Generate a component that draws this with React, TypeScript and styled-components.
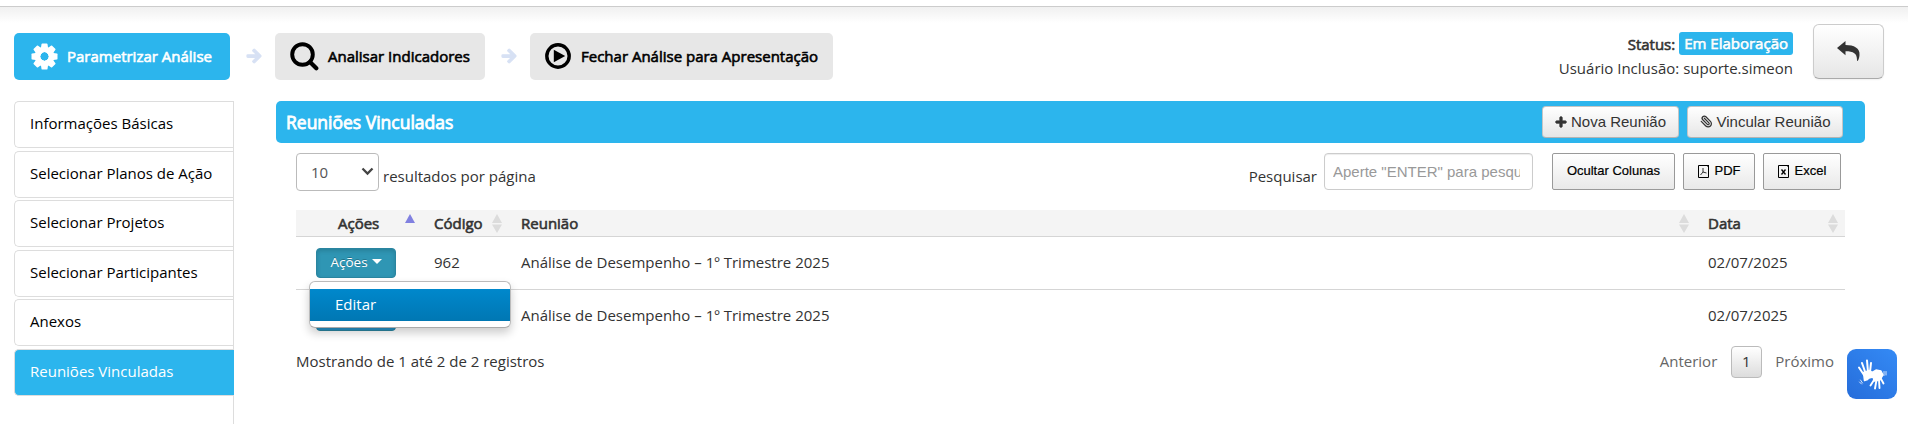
import React from "react";
import styled, { createGlobalStyle, css } from "styled-components";
import { FaArrowRight, FaPlus } from "react-icons/fa";
import { Paperclip } from "lucide-react";

const Global = createGlobalStyle`
  *{box-sizing:border-box}
  html,body{margin:0;background:#fff}
  body{font:15px/20px "Open Sans",sans-serif;color:#333;overflow:hidden}
  button,input{margin:0}
`;
const strong = css`-webkit-text-stroke:0.6px currentColor;`;
const BLUE = "#2cb5ed";

const Page = styled.div`height:424px;display:flex;flex-direction:column;`;
const TopEdge = styled.div`height:26px;flex:none;padding-top:6px;
  &::before{content:"";display:block;height:16px;border-top:1px solid #ccc;background:linear-gradient(#f0f0f0,#fff);}`;
const Header = styled.header`height:75px;flex:none;display:flex;align-items:flex-start;padding:7px 24px 0 14px;`;
const Step = styled.button<{ $active?: boolean; $w: number; $pad: number; $gap: number }>`
  display:flex;align-items:center;width:${p => p.$w}px;height:47px;border:0;border-radius:5px;padding:0 0 1px ${p => p.$pad}px;gap:${p => p.$gap}px;
  background:${p => (p.$active ? BLUE : "#e7e7e7")};color:${p => (p.$active ? "#fff" : "#000")};
  font:15px/20px "Open Sans",sans-serif;white-space:nowrap;${strong}
  svg{flex:none}
`;
const StepArrow = styled.span`width:45px;height:45px;display:flex;align-items:center;justify-content:center;padding-left:2px;color:#d7e1f4;
  svg{stroke:currentColor;stroke-width:40px}`;
const StatusBlock = styled.div`margin:-1px 20px 0 auto;text-align:right;font-size:15px;`;
const StatusLine = styled.div`display:flex;align-items:center;justify-content:flex-end;gap:4px;height:23px;line-height:22px;color:#333;${strong}`;
const Badge = styled.span`background:${BLUE};color:#fff;border-radius:3px;height:23px;line-height:22px;padding:0 5px;text-shadow:0 -1px 0 rgba(0,0,0,.2);`;
const UserLine = styled.div`margin-top:3px;`;
const BackButton = styled.button`
  width:71px;height:55px;margin-top:-9px;border:1px solid #ccc;border-bottom-color:#aaa;border-radius:6px;
  background:linear-gradient(#fff,#e6e6e6);display:flex;align-items:center;justify-content:center;padding:0;box-shadow:0 1px 2px rgba(0,0,0,.06);
`;
const Body = styled.div`flex:1;display:flex;`;
const Sidebar = styled.nav`width:220px;margin-left:14px;border-right:1px solid #ddd;display:flex;flex-direction:column;gap:2.6px;`;
const SideItem = styled.a<{ $active?: boolean }>`
  height:47px;flex:none;border:1px solid #ddd;border-right:0;border-radius:5px 0 0 5px;padding:0 0 0 15px;line-height:43px;color:#000;
  ${p => p.$active && css`background:${BLUE};color:#fff;margin-right:-1px;`}
`;
const Main = styled.main`margin-left:42px;width:1589px;`;
const PanelBar = styled.div`
  height:42px;border-radius:5px;background:${BLUE};display:flex;align-items:center;padding:0 22px 0 10px;gap:8px;
  h2{margin:0 auto 0 0;font-size:17.5px;line-height:24px;font-weight:400;color:#fff;-webkit-text-stroke:.8px #fff}
`;
const BarButton = styled.button<{ $w: number }>`
  width:${p => p.$w}px;height:32px;border:1px solid #c5c5c5;border-bottom-color:#b3b3b3;border-radius:4px;background:linear-gradient(#fff,#e6e6e6);
  font:15px/20px "Liberation Sans",sans-serif;color:#333;display:flex;align-items:center;justify-content:center;gap:4px;padding:0 0 1px;white-space:nowrap;
  svg{flex:none}
`;
const Content = styled.div`margin-left:20px;width:1549px;`;
const Tools = styled.div`height:67px;display:flex;align-items:flex-start;padding-top:10px;padding-right:4px;`;
const SelectBox = styled.div`
  width:83px;height:38px;border:1px solid #bbb;border-radius:4px;display:flex;align-items:center;justify-content:space-between;padding:0 4px 1px 14px;color:#555;
`;
const ToolLabel = styled.label`margin:13px 0 0 4px;`;
const SearchLabel = styled(ToolLabel)`margin-left:auto;margin-right:7px;`;
const Search = styled.input`
  width:209px;height:37px;border:1px solid #ccc;border-radius:4px;padding:0 12px 1px 8px;font:15px "Liberation Sans",sans-serif;margin-right:19px;
  box-shadow:inset 0 1px 1px rgba(0,0,0,.075);outline:0;
  &::placeholder{color:#999;opacity:1}
`;
const ToolButton = styled.button<{ $w: number }>`
  width:${p => p.$w}px;height:37px;border:1px solid #999;border-radius:2px;background:linear-gradient(#fff,#e9e9e9);color:#000;
  font:13px/20px "Liberation Sans",sans-serif;-webkit-text-stroke:.2px #000;display:flex;align-items:center;justify-content:center;gap:6px;padding:0 0 1px;white-space:nowrap;
  & + &{margin-left:8px}
`;
const Grid = styled.div`display:grid;grid-template-columns:126px 87px 1187px 149px;`;
const HeadRow = styled(Grid)`height:27px;background:#f4f4f4;border-bottom:1px solid #d5d5d5;`;
const HeadCell = styled.div<{ $center?: boolean }>`
  display:flex;align-items:center;justify-content:space-between;padding:0 7px 0 12px;${strong}
  ${p => p.$center && css`padding-left:42px;`}
`;
const Row = styled(Grid)`height:53px;align-items:center;border-bottom:1px solid #d5d5d5;&:last-of-type{border-bottom:0}`;
const Cell = styled.div<{ $nudge?: boolean }>`padding:0 0 2px 12px;`;
const ActionCell = styled.div`padding-left:20px;position:relative;`;
const ActionButton = styled.button<{ $open?: boolean }>`
  display:flex;align-items:center;justify-content:center;gap:4px;width:80px;height:30px;border:1px solid #2a85a0;border-radius:4px;
  font:13.5px/20px "Open Sans",sans-serif;color:#fff;padding:0 0 3px;text-shadow:0 -1px 0 rgba(0,0,0,.25);
  background:${p => (p.$open ? "#2f96b4" : "#2694c8")};
  ${p => p.$open && css`box-shadow:inset 0 2px 4px rgba(0,0,0,.15);`}
`;
const Caret = styled.i`border:5px solid transparent;border-top-color:#fff;border-bottom:0;`;
const Menu = styled.div`
  position:absolute;z-index:5;top:33px;left:13px;width:202px;height:47px;border:1px solid #bbb;border-bottom-color:#aaa;border-radius:6px;background:#fff;
  box-shadow:0 5px 10px rgba(0,0,0,.2);padding:7px 0;
`;
const MenuItem = styled.div`height:32px;background:linear-gradient(#08c,#0077b3);color:#fff;padding-left:25px;line-height:30px;`;
const LastRow = styled(Row)`height:52px;border-bottom:0;`;
const Footer = styled.footer`display:flex;align-items:center;height:32px;margin-top:4px;padding-right:11px;
  >span{padding-bottom:2px}`;
const Pager = styled.div`margin-left:auto;display:flex;align-items:center;color:#666;gap:13.5px;line-height:18px;
  >em{font-style:normal;padding-bottom:2px}`;
const PageNumber = styled.span`
  width:31px;height:32px;border:1px solid #bbb;border-radius:4px;background:linear-gradient(#fff,#dcdcdc);color:#333;text-align:center;line-height:29px;
`;
const Accessibility = styled.button`
  position:fixed;left:1847px;top:349px;width:50px;height:50px;border:0;border-radius:9px;background:linear-gradient(40deg,#266dda,#348af5);padding:0;display:flex;align-items:center;justify-content:center;
`;

const Gear = () => (
  <svg width="27" height="27" viewBox="-13.5 -13.5 27 27" fill="currentColor">
    {[0, 45, 90, 135].map(a => (
      <path key={a} transform={`rotate(${a})`} d="M-3-12.500Q-2.800-13 -2.200-13H2.200Q2.800-13 3-12.500L3.800-7V7L3 12.500Q2.800 13 2.200 13H-2.200Q-2.800 13-3 12.500L-3.800 7V-7z" mask="url(#gear-hole)" />
    ))}
    <circle r="7.100" fill="none" stroke="currentColor" strokeWidth="5.400" />
    <mask id="gear-hole" maskUnits="userSpaceOnUse" x="-14" y="-14" width="28" height="28">
      <rect x="-14" y="-14" width="28" height="28" fill="#fff" /><circle r="4.400" fill="#000" />
    </mask>
  </svg>
);
const Magnifier = () => (
  <svg width="29" height="29" viewBox="0 0 29 29" fill="none" stroke="#000">
    <circle cx="12.5" cy="12.5" r="10.3" strokeWidth="3.9" />
    <path d="M20 20l6.3 6.3" strokeWidth="4.2" strokeLinecap="round" />
  </svg>
);
const PlayCircle = () => (
  <svg width="26" height="26" viewBox="0 0 26 26">
    <circle cx="13" cy="13" r="11.2" fill="none" stroke="#000" strokeWidth="3.4" />
    <path d="M8.800 6.800L20.200 13 8.800 19.200z" />
  </svg>
);
const BackArrow = () => (
  <svg width="23" height="21" viewBox="0 0 23 21" fill="#333">
    <path d="M0 7L8.500 0V4C17 4 23 7 22.500 14C22.400 17 21 20 20.400 20C20 20 20 19.500 20 19C20 12.500 16.500 10.300 8.500 10.300V14.200z" />
  </svg>
);
const Sort = () => (
  <svg width="10" height="19" viewBox="0 0 10 19" fill="#dcdcdc"><path d="M0 9l5-9 5 9zM0 10.500h10l-5 8.500z" /></svg>
);
const SortAsc = () => (
  <svg width="10" height="19" viewBox="0 0 10 19" fill="#8080e0"><path d="M0 9l5-9 5 9z" /></svg>
);
const FileIcon = ({ children }: { children: React.ReactNode }) => (
  <svg width="11" height="13" viewBox="0 0 11 13" fill="none" stroke="#000">
    <path d="M.5.500H10.500V12.500H.5z" /><path d="M8 0h3v3z" fill="#000" stroke="none" />{children}
  </svg>
);
const Hands = () => (
  <svg width="32" height="32" viewBox="0 0 32 32" fill="none" stroke="#fff" strokeLinecap="round" strokeLinejoin="round">
    <path d="M8 17L3 9.500M9.500 15L6 5M12 14l-1-11.500M14 14l1-9" strokeWidth="2" />
    <path d="M7.500 14.500l6-2 3 2-5 7-3 1z" fill="#fff" strokeWidth="1.500" />
    <path d="M14 15.500l6-3.500 5 1 2 4-3 5-6 1-1-4-4 1z" fill="#fff" strokeWidth="1.300" />
    <path d="M18 22l-3.500 5.500M20.500 22l-1.500 8.500M23 22l.5 8M24.500 20l3 5.500" strokeWidth="1.900" />
    <path d="M28 13.500v4M30 13.500v3.500M4.500 22l2 3M3.500 24l2 2" strokeWidth=".8" />
  </svg>
);

const sections = ["Informações Básicas", "Selecionar Planos de Ação", "Selecionar Projetos", "Selecionar Participantes", "Anexos", "Reuniões Vinculadas"];

export default function App() {
  return (
    <Page>
      <Global />
      <TopEdge />
      <Header>
        <Step $active $w={216} $pad={17} $gap={9}><Gear />Parametrizar Análise</Step>
        <StepArrow><FaArrowRight size={16} /></StepArrow>
        <Step $w={210} $pad={15} $gap={9}><Magnifier />Analisar Indicadores</Step>
        <StepArrow><FaArrowRight size={16} /></StepArrow>
        <Step $w={303} $pad={15} $gap={10}><PlayCircle />Fechar Análise para Apresentação</Step>
        <StatusBlock>
          <StatusLine>Status: <Badge>Em Elaboração</Badge></StatusLine>
          <UserLine>Usuário Inclusão: suporte.simeon</UserLine>
        </StatusBlock>
        <BackButton><BackArrow /></BackButton>
      </Header>
      <Body>
        <Sidebar>
          {sections.map((s, i) => <SideItem key={s} $active={i === 5}>{s}</SideItem>)}
        </Sidebar>
        <Main>
          <PanelBar>
            <h2>Reuniões Vinculadas</h2>
            <BarButton $w={137}><FaPlus size={12} stroke="#333" strokeWidth={40} />Nova Reunião</BarButton>
            <BarButton $w={156}><Paperclip size={13} strokeWidth={2.3} transform="scale(-1 1)" />Vincular Reunião</BarButton>
          </PanelBar>
          <Content>
            <Tools>
              <SelectBox>10
                <svg width="13" height="9" viewBox="0 0 13 9" fill="none" stroke="#444" strokeWidth="2.300"><path d="M1.500 1.500l5 5 5-5" /></svg>
              </SelectBox>
              <ToolLabel>resultados por página</ToolLabel>
              <SearchLabel>Pesquisar</SearchLabel>
              <Search placeholder={'Aperte "ENTER" para pesquisar'} />
              <ToolButton $w={123}>Ocultar Colunas</ToolButton>
              <ToolButton $w={72}><FileIcon><path d="M2.500 10L5 7V3M5 7l3.500 1" strokeWidth=".8" /></FileIcon>PDF</ToolButton>
              <ToolButton $w={78}><FileIcon><path d="M3.500 4.500l4 5M7.500 4.500l-4 5" strokeWidth="1.300" /></FileIcon>Excel</ToolButton>
            </Tools>
            <HeadRow>
              <HeadCell $center>Ações<SortAsc /></HeadCell>
              <HeadCell>Código<Sort /></HeadCell>
              <HeadCell>Reunião<Sort /></HeadCell>
              <HeadCell>Data<Sort /></HeadCell>
            </HeadRow>
            <Row>
              <ActionCell>
                <ActionButton $open>Ações<Caret /></ActionButton>
                <Menu><MenuItem>Editar</MenuItem></Menu>
              </ActionCell>
              <Cell>962</Cell>
              <Cell>Análise de Desempenho – 1º Trimestre 2025</Cell>
              <Cell>02/07/2025</Cell>
            </Row>
            <LastRow>
              <ActionCell><ActionButton aria-label="Ações" /></ActionCell>
              <Cell />
              <Cell>Análise de Desempenho – 1º Trimestre 2025</Cell>
              <Cell>02/07/2025</Cell>
            </LastRow>
            <Footer>
              <span>Mostrando de 1 até 2 de 2 registros</span>
              <Pager><em>Anterior</em><PageNumber>1</PageNumber><em>Próximo</em></Pager>
            </Footer>
          </Content>
        </Main>
      </Body>
      <Accessibility><Hands /></Accessibility>
    </Page>
  );
}
